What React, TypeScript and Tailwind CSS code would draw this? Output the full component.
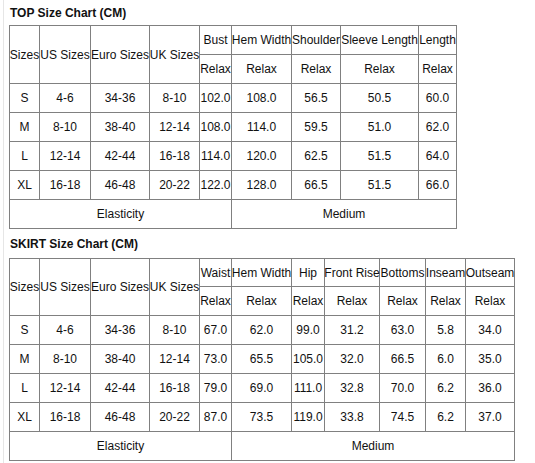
import React from 'react';

type Chart = {
  title: string;
  measures: string[];
  rows: string[][];
  cols: string;
  rowsTpl: string;
  titleH: string;
  mediumSpan: string;
};

const sizeCols = ['Sizes', 'US Sizes', 'Euro Sizes', 'UK Sizes'];

const charts: Chart[] = [
  {
    title: 'TOP Size Chart (CM)',
    measures: ['Bust', 'Hem Width', 'Shoulder', 'Sleeve Length', 'Length'],
    rows: [
      ['S', '4-6', '34-36', '8-10', '102.0', '108.0', '56.5', '50.5', '60.0'],
      ['M', '8-10', '38-40', '12-14', '108.0', '114.0', '59.5', '51.0', '62.0'],
      ['L', '12-14', '42-44', '16-18', '114.0', '120.0', '62.5', '51.5', '64.0'],
      ['XL', '16-18', '46-48', '20-22', '122.0', '128.0', '66.5', '51.5', '66.0'],
    ],
    cols: 'grid-cols-[29px_50px_58px_49px_31px_59px_48px_77px_37px]',
    rowsTpl: 'grid-rows-[28px_28px_28px_28px_28px_28px_28px]',
    titleH: 'h-[25px]',
    mediumSpan: 'col-span-4',
  },
  {
    title: 'SKIRT Size Chart (CM)',
    measures: ['Waist', 'Hem Width', 'Hip', 'Front Rise', 'Bottoms', 'Inseam', 'Outseam'],
    rows: [
      ['S', '4-6', '34-36', '8-10', '67.0', '62.0', '99.0', '31.2', '63.0', '5.8', '34.0'],
      ['M', '8-10', '38-40', '12-14', '73.0', '65.5', '105.0', '32.0', '66.5', '6.0', '35.0'],
      ['L', '12-14', '42-44', '16-18', '79.0', '69.0', '111.0', '32.8', '70.0', '6.2', '36.0'],
      ['XL', '16-18', '46-48', '20-22', '87.0', '73.5', '119.0', '33.8', '74.5', '6.2', '37.0'],
    ],
    cols: 'grid-cols-[29px_50px_58px_49px_31px_59px_32px_54px_45px_39px_48px]',
    rowsTpl: 'grid-rows-[27px_28px_28px_28px_28px_28px_28px]',
    titleH: 'h-[29px]',
    mediumSpan: 'col-span-6',
  },
];

const Cell = ({ children, className = '' }: { children: React.ReactNode; className?: string }) => (
  <div className={`bg-white flex items-center justify-center whitespace-nowrap ${className}`}>
    <span className="relative z-10">{children}</span>
  </div>
);

const SizeChart = ({ chart }: { chart: Chart }) => (
  <div>
    <div className={`${chart.titleH} flex items-center pl-px font-bold text-[12px] text-[#111]`}>{chart.title}</div>
    <div className={`inline-grid ${chart.cols} ${chart.rowsTpl} gap-px p-px bg-[#808080]`}>
      {sizeCols.map(c => (
        <Cell key={c} className="row-span-2">{c}</Cell>
      ))}
      {chart.measures.map(m => (
        <Cell key={m}>{m}</Cell>
      ))}
      {chart.measures.map(m => (
        <Cell key={m + '-r'}>Relax</Cell>
      ))}
      {chart.rows.map(r =>
        r.map((v, i) => <Cell key={r[0] + i}>{v}</Cell>)
      )}
      <Cell className="col-span-5">Elasticity</Cell>
      <Cell className={chart.mediumSpan}>Medium</Cell>
    </div>
  </div>
);

export default function App() {
  return (
    <div className="w-[535px] h-[463px] bg-white pl-[3px] font-['Liberation_Sans',Arial,sans-serif] text-[12px] text-[#111] overflow-hidden">
      <div className="h-full border-l border-[#e6e6e6] pl-[5px]">
        {charts.map(c => (
          <SizeChart key={c.title} chart={c} />
        ))}
      </div>
    </div>
  );
}
